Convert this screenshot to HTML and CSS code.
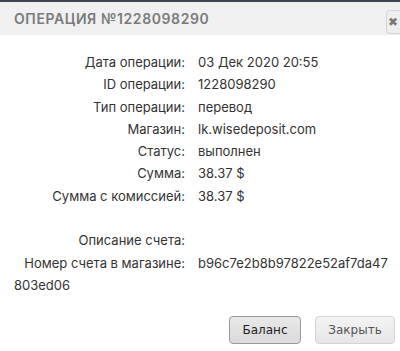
FILE: index.html
```html
<!DOCTYPE html>
<html lang="ru">
<head>
    <meta charset="UTF-8">
    <title>Операция №1228098290</title>
    <link rel="stylesheet" href="styles.css">
</head>
<body>
    <div class="dialog">
        <div class="dialog-title">
            <span class="title-text">Операция №1228098290</span>
            <button class="close-btn" title="Закрыть">&#10006;</button>
        </div>

        <div class="dialog-content">
            <div class="row"><span class="label">Дата операции:</span><span class="value">03 Дек 2020 20:55</span></div>
            <div class="row"><span class="label">ID операции:</span><span class="value">1228098290</span></div>
            <div class="row"><span class="label">Тип операции:</span><span class="value">перевод</span></div>
            <div class="row"><span class="label">Магазин:</span><span class="value">lk.wisedeposit.com</span></div>
            <div class="row"><span class="label">Статус:</span><span class="value">выполнен</span></div>
            <div class="row"><span class="label">Сумма:</span><span class="value">38.37 $</span></div>
            <div class="row"><span class="label">Сумма с комиссией:</span><span class="value">38.37 $</span></div>
            <div class="row spacer"></div>
            <div class="row"><span class="label">Описание счета:</span><span class="value"></span></div>
            <div class="row"><span class="label">Номер счета в магазине:</span><span class="value">b96c7e2b8b97822e52af7da47803ed06</span></div>
        </div>

        <div class="dialog-buttons">
            <button class="btn btn-active">Баланс</button>
            <button class="btn btn-close">Закрыть</button>
        </div>
    </div>
</body>
</html>
```

FILE: styles.css
```css
body {
    margin: 0;
    padding: 0;
    background: #ffffff;
    font-family: 'Inter', sans-serif;
}

.dialog {
    border-top: 2px solid #3b4650;
    background: #ffffff;
    width: 400px;
    height: 349px;
    overflow: hidden;
}

.dialog-title {
    background: #f0f0f0;
    height: 33px;
    display: flex;
    align-items: center;
    justify-content: space-between;
    padding-left: 14px;
}

.title-text {
    text-transform: uppercase;
    color: #7a7a7a;
    font-size: 14px;
    font-weight: 600;
    letter-spacing: 0.6px;
}

.close-btn {
    width: 22px;
    height: 24px;
    margin-right: -8px;
    margin-top: 6px;
    border: 1px solid #d3d3d3;
    border-radius: 4px;
    background: #eeeeee;
    color: #777777;
    font-size: 12px;
    padding: 0 8px 0 0;
    font-family: 'DejaVu Sans', sans-serif;
}

.dialog-content {
    padding: 16px 12px 0 14px;
    font-size: 13px;
    color: #333333;
}

.row {
    line-height: 22.3px;
    word-break: break-all;
}

.spacer {
    height: 22.3px;
}

.label {
    display: inline-block;
    width: 171px;
    text-align: right;
    margin-right: 13px;
    word-break: normal;
    white-space: nowrap;
}

.dialog-buttons {
    display: flex;
    justify-content: flex-end;
    gap: 14px;
    padding: 20px 5px 0 0;
}

.btn {
    font-family: 'DejaVu Sans', sans-serif;
    font-size: 12px;
    color: #555555;
    background: linear-gradient(#f3f3f3, #e6e6e6);
    border: 1px solid #d3d3d3;
    border-radius: 4px;
    height: 28px;
    padding: 0;
}

.btn-active {
    background: linear-gradient(#e8e8e8, #dadada);
    border-color: #999999;
    color: #212121;
    width: 72px;
}

.btn-close {
    width: 80px;
}
```
